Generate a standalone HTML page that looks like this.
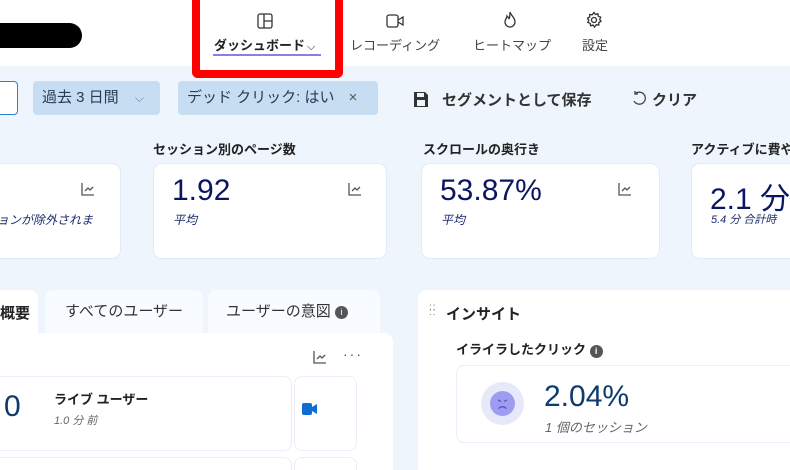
<!DOCTYPE html>
<html><head><meta charset="utf-8"><style>
*{box-sizing:border-box;margin:0;padding:0}
html,body{width:790px;height:470px;overflow:hidden}
body{background:#eef5fc;font-family:"Liberation Sans","Noto Sans CJK JP",sans-serif;position:relative;color:#222}
.a{position:absolute;white-space:nowrap}
.hdr{left:0;top:0;width:790px;height:66px;background:#fff}
.nav{font-size:13px;color:#444;text-align:center}
.chip{background:#c7def2;border-radius:4px;height:34px;top:81px;font-size:15px;color:#2b3a55;line-height:34px;padding-left:9px}
.lbl{font-size:13px;font-weight:bold;color:#222;top:139px}
.card{background:#fff;border:1px solid #e1ebf7;border-radius:9px;top:163px;height:96px;overflow:hidden}
.big{font-size:30px;color:#0b1660;position:absolute;left:18px;top:10px;white-space:nowrap}
.sub{font-size:12px;font-style:italic;color:#1b2a6a;position:absolute;left:19px;top:47px;white-space:nowrap}
.tr{position:absolute;top:18px;width:14px;height:14px}
</style></head><body>
<div class="a hdr"></div>
<div class="a" style="left:0;top:23px;width:82px;height:25px;background:#000;border-radius:0 13px 13px 0"></div>
<div class="a" style="left:192px;top:-10px;width:151px;height:88px;border:8px solid #f00;border-top:none;border-radius:0 0 6px 6px;background:#fff"></div>
<svg class="a" style="left:256px;top:12px" width="18" height="18" viewBox="0 0 18 18" fill="none" stroke="#333" stroke-width="1.3"><rect x="2" y="2" width="14" height="14" rx="2"/><path d="M8 2v14M8 9h8"/></svg>
<div class="a nav" style="left:214px;top:35px;font-weight:bold;color:#222">ダッシュボード<span style="font-weight:normal;font-size:11px;margin-left:2px">⌵</span></div>
<div class="a" style="left:213px;top:54px;width:108px;height:2px;background:#8b7ee8"></div>
<svg class="a" style="left:385px;top:12px" width="20" height="18" viewBox="0 0 20 18" fill="none" stroke="#333" stroke-width="1.3"><rect x="2" y="3" width="11" height="12" rx="2"/><path d="M13 8l5-3v8l-5-3"/></svg>
<div class="a nav" style="left:350px;top:35px">レコーディング</div>
<svg class="a" style="left:502px;top:10px" width="16" height="20" viewBox="0 0 16 20" fill="none" stroke="#333" stroke-width="1.3"><path d="M8 2c1 4 5 5 5 10a5 5 0 0 1-10 0c0-3 2-4 2-6 1 1 2 2 2 3 1-2 1-5 1-7z"/></svg>
<div class="a nav" style="left:473px;top:35px">ヒートマップ</div>
<svg class="a" style="left:585px;top:11px" width="18" height="18" viewBox="0 0 18 18" fill="none" stroke="#333" stroke-width="1.3"><circle cx="9" cy="9" r="2.5"/><path d="M9 1.5l1.5 2 2.4-.8.4 2.5 2.4.9-1 2.3 1.3 1.9-2.2 1.2v2.5l-2.5-.3L9.5 16 8 14l-2.4.8-.4-2.5-2.4-.9 1-2.3L2.5 7.2 4.7 6v-2.5l2.5.3z"/></svg>
<div class="a nav" style="left:582px;top:35px">設定</div>

<div class="a" style="left:-8px;top:81px;width:26px;height:34px;background:#fff;border:1px solid #2a7fd0;border-radius:4px"></div>
<div class="a chip" style="left:33px;width:127px">過去 3 日間 <span style="color:#6b87a8;margin-left:12px;font-size:12px">⌵</span></div>
<div class="a chip" style="left:178px;width:200px">デッド クリック: はい <span style="color:#555;margin-left:10px">×</span></div>
<svg class="a" style="left:413px;top:90px" width="16" height="18" viewBox="0 0 16 18"><path d="M1 2h11l3 3v12H1z" fill="#333"/><rect x="4" y="3" width="7" height="4" fill="#eef5fc"/><rect x="4" y="10" width="8" height="6" fill="#eef5fc"/></svg>
<div class="a" style="left:442px;top:89px;font-size:15px;font-weight:bold;color:#333">セグメントとして保存</div>
<svg class="a" style="left:630px;top:89px" width="20" height="20" viewBox="0 0 20 20" fill="none" stroke="#444" stroke-width="1.3"><path d="M5 5a6 6 0 1 1-1 7M5 2v3h3"/></svg>
<div class="a" style="left:652px;top:89px;font-size:15px;font-weight:bold;color:#333">クリア</div>

<div class="a lbl" style="left:153px">セッション別のページ数</div>
<div class="a lbl" style="left:423px">スクロールの奥行き</div>
<div class="a lbl" style="left:691px">アクティブに費や</div>
<div class="a card" style="left:-20px;width:141px"><div class="sub" style="left:16px">ョンが除外されま</div><svg class="tr" style="left:100px" viewBox="0 0 14 14" fill="none" stroke="#555" stroke-width="1.3"><path d="M1 1v12h12M4 9l3-3 2 2 3-3"/></svg></div>
<div class="a card" style="left:153px;width:234px"><div class="big">1.92</div><div class="sub">平均</div><svg class="tr" style="left:194px" viewBox="0 0 14 14" fill="none" stroke="#555" stroke-width="1.3"><path d="M1 1v12h12M4 9l3-3 2 2 3-3"/></svg></div>
<div class="a card" style="left:421px;width:239px"><div class="big">53.87%</div><div class="sub">平均</div><svg class="tr" style="left:196px" viewBox="0 0 14 14" fill="none" stroke="#555" stroke-width="1.3"><path d="M1 1v12h12M4 9l3-3 2 2 3-3"/></svg></div>
<div class="a card" style="left:691px;width:120px"><div class="big">2.1 分</div><div class="sub" style="font-size:11px">5.4 分 合計時</div></div>

<div class="a" style="left:-10px;top:290px;width:48px;height:50px;background:#fff;border-radius:8px 8px 0 0"></div>
<div class="a" style="left:0;top:302px;font-size:15px;font-weight:bold">概要</div>
<div class="a" style="left:45px;top:290px;width:158px;height:45px;background:#f8fbff;border-radius:8px 8px 0 0;font-size:15px;color:#333;text-align:center;line-height:44px">すべてのユーザー</div>
<div class="a" style="left:208px;top:290px;width:172px;height:45px;background:#f8fbff;border-radius:8px 8px 0 0;font-size:15px;color:#333;line-height:44px;padding-left:18px">ユーザーの意図 <span style="display:inline-block;width:13px;height:13px;border-radius:50%;background:#555;color:#fff;font-size:9px;line-height:13px;text-align:center;vertical-align:1px">i</span></div>
<div class="a" style="left:0;top:333px;width:393px;height:140px;background:#fff;border-radius:0 9px 0 0"></div>
<svg class="a" style="left:313px;top:350px" width="14" height="14" viewBox="0 0 14 14" fill="none" stroke="#555" stroke-width="1.3"><path d="M1 1v12h12M4 9l3-3 2 2 3-3"/></svg>
<div class="a" style="left:343px;top:346px;font-size:14px;color:#555;letter-spacing:2px">···</div>
<div class="a" style="left:-10px;top:376px;width:302px;height:75px;border:1px solid #e8eff8;border-radius:8px"></div>
<div class="a" style="left:4px;top:390px;font-size:30px;color:#0e3a6e">0</div>
<div class="a" style="left:54px;top:389px;font-size:13px;font-weight:bold">ライブ ユーザー</div>
<div class="a" style="left:54px;top:412px;font-size:11px;font-style:italic;color:#666">1.0 分 前</div>
<div class="a" style="left:294px;top:376px;width:63px;height:75px;border:1px solid #e8eff8;border-radius:8px"></div>
<svg class="a" style="left:302px;top:403px" width="16" height="12" viewBox="0 0 16 12"><rect x="0" y="0" width="10" height="12" rx="2" fill="#0f6cd3"/><path d="M10 4l5-3v10l-5-3z" fill="#0f6cd3"/></svg>
<div class="a" style="left:-10px;top:457px;width:302px;height:30px;border:1px solid #e8eff8;border-radius:8px"></div>
<div class="a" style="left:294px;top:457px;width:63px;height:30px;border:1px solid #e8eff8;border-radius:8px"></div>

<div class="a" style="left:418px;top:290px;width:380px;height:190px;background:#fff;border-radius:9px"></div>
<div class="a" style="left:429px;top:305px;font-size:10px;color:#777;line-height:5px;letter-spacing:1px">::<br>::</div>
<div class="a" style="left:446px;top:303px;font-size:15px;font-weight:bold">インサイト</div>
<div class="a" style="left:456px;top:339px;font-size:13px;font-weight:bold">イライラしたクリック <span style="display:inline-block;width:13px;height:13px;border-radius:50%;background:#555;color:#fff;font-size:9px;line-height:13px;text-align:center">i</span></div>
<div class="a" style="left:456px;top:365px;width:350px;height:78px;border:1px solid #e8eff8;border-radius:8px"></div>
<div class="a" style="left:481px;top:382px;width:43px;height:43px;border-radius:50%;background:#e8e8fb"></div>
<svg class="a" style="left:490px;top:391px" width="25" height="25" viewBox="0 0 25 25"><circle cx="12.5" cy="12.5" r="12.5" fill="#9e9cf0"/><path d="M8 9l3 1.5M17 9l-3 1.5M8.5 17.5q4-3.5 8 0" stroke="#5c5ac0" stroke-width="1.4" fill="none"/></svg>
<div class="a" style="left:544px;top:380px;font-size:30px;color:#0e3a6e">2.04%</div>
<div class="a" style="left:545px;top:417px;font-size:13px;font-style:italic;color:#666">1 個のセッション</div>
</body></html>
